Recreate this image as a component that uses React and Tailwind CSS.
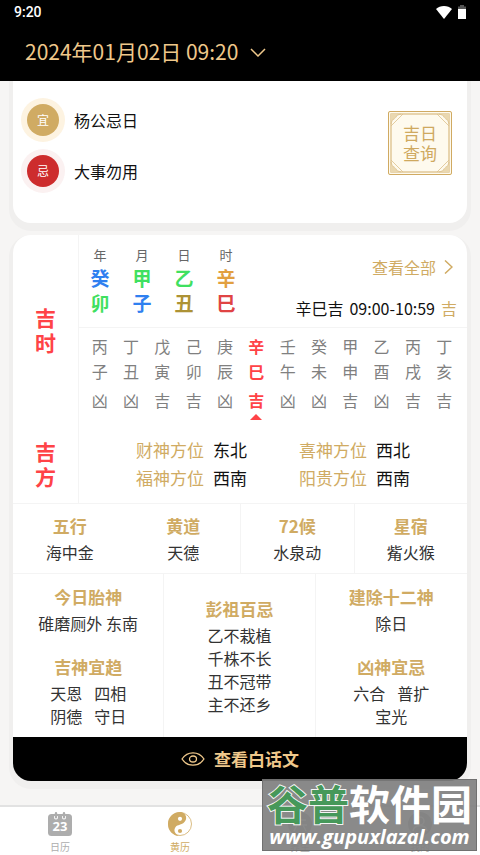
const pillars = [
  { label: '年', stem: '癸', branch: '卯', stemColor: 'text-[#2f80f0]', branchColor: 'text-[#3fe060]' },
  { label: '月', stem: '甲', branch: '子', stemColor: 'text-[#3fe060]', branchColor: 'text-[#2f80f0]' },
  { label: '日', stem: '乙', branch: '丑', stemColor: 'text-[#3fe060]', branchColor: 'text-[#ad9235]' },
  { label: '时', stem: '辛', branch: '巳', stemColor: 'text-[#e2a040]', branchColor: 'text-[#e04444]' },
];

const hourStems = [...'丙丁戊己庚辛壬癸甲乙丙丁'];
const hourBranches = [...'子丑寅卯辰巳午未申酉戌亥'];
const hourLuck = [...'凶凶吉吉凶吉凶凶吉凶吉吉'];
const currentHour = 5;

const directions = [
  ['财神方位', '东北'],
  ['喜神方位', '西北'],
  ['福神方位', '西南'],
  ['阳贵方位', '西南'],
];

const facts = [
  { title: '五行', value: '海中金', divider: false },
  { title: '黄道', value: '天德', divider: false },
  { title: '72候', value: '水泉动', divider: true },
  { title: '星宿', value: '觜火猴', divider: true },
];

function StatusBar() {
  return (
    <div className="flex h-6 items-center justify-between px-[14px] text-white">
      <span className="font-[Roboto,sans-serif] text-sm font-medium">9:20</span>
      <div className="flex items-center gap-[6px]">
        <svg width="16" height="13" viewBox="0 0 16 13" aria-hidden="true">
          <path d="M0 3C4-1 12-1 16 3L8 13Z" fill="#fff" />
        </svg>
        <svg width="8" height="14" viewBox="0 0 8 14" aria-hidden="true">
          <path d="M2 0h4v1.500h2V5H0V1.500h2z" fill="#555" />
          <path d="M0 4h8v10H0z" fill="#fff" />
        </svg>
      </div>
    </div>
  );
}

function Header() {
  return (
    <header className="h-[81px] bg-black">
      <StatusBar />
      <button type="button" className="flex h-14 items-center gap-3 pl-[25px] text-[21px] text-[#efc88b]">
        <span>2024年01月02日 09:20</span>
        <svg width="16" height="9" viewBox="0 0 16 9" fill="none" stroke="currentColor" strokeWidth="1.500" aria-hidden="true">
          <path d="M1 1l7 7 7-7" />
        </svg>
      </button>
    </header>
  );
}

function Advice({ mark, text, ring, fill }) {
  return (
    <li className="flex items-center gap-[9px]">
      <span className={`flex size-11 items-center justify-center rounded-full ${ring}`}>
        <span className={`flex size-8 items-center justify-center rounded-full text-xs text-white ${fill}`}>{mark}</span>
      </span>
      <span className="text-base text-[#111]">{text}</span>
    </li>
  );
}

function Corner({ transform }) {
  return (
    <g transform={transform} fill="none" stroke="#dcc08a" strokeWidth="0.800">
      <path d="M3 13C4 8 8 4 13 3M3 9C6 9 9 6 9 3M3 15L15 3" />
      <path d="M3 3h7L3 10z" fill="#ead8b0" stroke="none" />
    </g>
  );
}

function DayQueryButton() {
  return (
    <button type="button" className="relative flex size-16 flex-col items-center justify-center bg-[#fefaee] text-[17px] leading-5 text-[#cfa95f]">
      <svg className="absolute inset-0" width="64" height="64" viewBox="0 0 64 64" aria-hidden="true">
        <rect x="0.500" y="0.500" width="63" height="63" rx="1.500" fill="none" stroke="#d0aa62" />
        <rect x="3" y="3" width="58" height="58" fill="none" stroke="#dcc08a" strokeWidth="1.300" />
        <Corner />
        <Corner transform="translate(64 0) scale(-1 1)" />
        <Corner transform="translate(0 64) scale(1 -1)" />
        <Corner transform="translate(64 64) scale(-1 -1)" />
      </svg>
      <span>吉日</span>
      <span>查询</span>
    </button>
  );
}

function SummaryCard() {
  return (
    <section className="flex items-start justify-between rounded-b-[18px] bg-white pt-[17px] pr-[15px] pb-[30px] pl-2 shadow-[0_4px_0_4px_#f0efee]">
      <ul className="flex flex-col gap-[7px]">
        <Advice mark="宜" text="杨公忌日" ring="bg-[#fdf3e1]" fill="bg-[#d0ab63]" />
        <Advice mark="忌" text="大事勿用" ring="bg-[#fbf1f1]" fill="bg-[#cd2c2d]" />
      </ul>
      <div className="pt-[13px]">
        <DayQueryButton />
      </div>
    </section>
  );
}

function SideTitle({ first, second }) {
  return (
    <h2 className="flex w-[66px] shrink-0 flex-col items-center justify-center border-r border-[#f4f4f4] pb-[2px] text-[21px] leading-[25px] font-bold text-[#ff4347]">
      <span>{first}</span>
      <span>{second}</span>
    </h2>
  );
}

function Pillars() {
  return (
    <div className="flex pt-[9px]">
      {pillars.map((p) => (
        <div key={p.label} className="flex w-[42px] flex-col items-center text-[19px] leading-[25px] font-bold">
          <span className="text-[13px] leading-[21px] font-normal text-[#666]">{p.label}</span>
          <span className={p.stemColor}>{p.stem}</span>
          <span className={p.branchColor}>{p.branch}</span>
        </div>
      ))}
    </div>
  );
}

function HourRow({ items, height, marker }) {
  return (
    <tr className={height}>
      {items.map((c, i) => (
        <td key={i} className={i === currentHour ? 'relative p-0 font-bold text-[#ff4347]' : 'p-0'}>
          {c}
          {marker && i === currentHour && (
            <svg className="absolute inset-x-0 bottom-[-4px] mx-auto" width="12" height="6" viewBox="0 0 12 6" aria-hidden="true">
              <path d="M6 0l6 6H0z" fill="#ff4347" />
            </svg>
          )}
        </td>
      ))}
    </tr>
  );
}

function LuckyHours() {
  return (
    <div className="flex h-48">
      <SideTitle first="吉" second="时" />
      <div className="flex min-w-0 flex-1 flex-col">
        <div className="flex h-[93px] justify-between border-b border-[#f4f4f4]">
          <Pillars />
          <div className="flex flex-col items-end pt-5 pr-[10px]">
            <a href="#all" className="flex items-center gap-2 pr-1 text-base leading-6 text-[#d0ab63]">
              查看全部
              <svg width="9" height="14" viewBox="0 0 9 14" fill="none" stroke="currentColor" strokeWidth="1.500" aria-hidden="true">
                <path d="M1 .5L8 7l-7 6.500" />
              </svg>
            </a>
            <p className="mt-[17px] flex gap-[6px] text-base leading-6 text-[#111]">
              <span>辛巳吉</span>
              <span>09:00-10:59</span>
              <span className="text-[#d0ab63]">吉</span>
            </p>
          </div>
        </div>
        <div className="pt-[5px] pr-[7px] pl-[5px]">
          <table className="w-full table-fixed border-collapse text-center text-base leading-6 text-[#808080]">
            <tbody>
              <HourRow items={hourStems} height="h-[25px]" />
              <HourRow items={hourBranches} height="h-[26px]" />
              <HourRow items={hourLuck} height="h-8" marker />
            </tbody>
          </table>
        </div>
      </div>
    </div>
  );
}

function LuckyDirections() {
  return (
    <div className="flex h-[76px]">
      <SideTitle first="吉" second="方" />
      <dl className="grid flex-1 grid-cols-2 content-center px-[31px] pb-[2px] text-[17px] leading-7">
        {directions.map(([name, value]) => (
          <div key={name} className="flex justify-center gap-[9px]">
            <dt className="text-[#d0ab63]">{name}</dt>
            <dd className="text-[#111]">{value}</dd>
          </div>
        ))}
      </dl>
    </div>
  );
}

function Block({ title, children }) {
  return (
    <div className="flex flex-col items-center text-base leading-[23px] text-[#333]">
      <h3 className="mb-[2px] text-[17px] leading-[27px] font-bold text-[#d0ab63]">{title}</h3>
      {children}
    </div>
  );
}

function AlmanacCard() {
  return (
    <section className="mt-3 overflow-hidden rounded-[18px] bg-white shadow-[0_4px_0_4px_#f0efee]">
      <LuckyHours />
      <LuckyDirections />
      <div className="grid h-[70px] grid-cols-4 border-t border-[#f4f4f4]">
        {facts.map((f) => (
          <div key={f.title} className={f.divider ? 'border-l border-[#f4f4f4] pt-2' : 'pt-2'}>
            <Block title={f.title}>
              <p>{f.value}</p>
            </Block>
          </div>
        ))}
      </div>
      <div className="grid h-[164px] grid-cols-3 border-t border-[#f4f4f4]">
        <div className="flex flex-col gap-[18px] border-r border-[#f4f4f4] pt-[9px]">
          <Block title="今日胎神">
            <p>碓磨厕外 东南</p>
          </Block>
          <Block title="吉神宜趋">
            <p className="flex gap-3"><span>天恩</span><span>四相</span></p>
            <p className="flex gap-3"><span>阴德</span><span>守日</span></p>
          </Block>
        </div>
        <div className="flex flex-col justify-center border-r border-[#f4f4f4]">
          <Block title="彭祖百忌">
            <p>乙不栽植</p>
            <p>千株不长</p>
            <p>丑不冠带</p>
            <p>主不还乡</p>
          </Block>
        </div>
        <div className="flex flex-col gap-[18px] pt-[9px]">
          <Block title="建除十二神">
            <p>除日</p>
          </Block>
          <Block title="凶神宜忌">
            <p className="flex gap-3"><span>六合</span><span>普扩</span></p>
            <p>宝光</p>
          </Block>
        </div>
      </div>
      <button type="button" className="flex h-11 w-full items-center justify-center gap-[9px] bg-black text-[17px] font-bold text-[#efc88b]">
        <svg width="24" height="14" viewBox="0 0 24 14" fill="none" stroke="currentColor" strokeWidth="1.300" aria-hidden="true">
          <path d="M1 7C4 2.500 8 .8 12 .8S20 2.500 23 7C20 11.500 16 13.200 12 13.200S4 11.500 1 7Z" />
          <ellipse cx="12" cy="7" rx="3.500" ry="3" />
        </svg>
        查看白话文
      </button>
    </section>
  );
}

function CalendarIcon() {
  return (
    <svg width="24" height="24" viewBox="0 0 24 24" aria-hidden="true">
      <rect y="2" width="24" height="22" rx="3.500" fill="#adadad" />
      <path d="M8 3v2.500M16 3v2.500" stroke="#fff" strokeWidth="4" strokeLinecap="round" />
      <path d="M5 2h6v2H5zM13 2h6v2h-6z" fill="#adadad" />
      <path d="M8 1.200v4M16 1.200v4" stroke="#adadad" strokeWidth="2.400" strokeLinecap="round" />
      <text x="12" y="18.500" textAnchor="middle" fill="#fff" fontSize="13" fontWeight="700" fontFamily="Noto Sans, sans-serif">23</text>
    </svg>
  );
}

function TaijiIcon() {
  return (
    <svg width="24" height="24" viewBox="0 0 24 24" aria-hidden="true">
      <circle cx="12" cy="12" r="11.500" fill="#fff" stroke="#d0ab63" strokeWidth="0.800" />
      <path d="M14 .2C6 -.8 0 5 0 12S5 23.500 11 24C7 22 5.500 19 7 16C8.500 12.500 12 13.500 15.500 11C19.500 8 19 2 14 .2Z" fill="#d0ab63" />
      <circle cx="12" cy="6.800" r="2.100" fill="#fff" />
      <circle cx="12" cy="19" r="2.100" fill="#d0ab63" />
    </svg>
  );
}

function WellnessIcon() {
  return (
    <svg width="24" height="24" viewBox="0 0 24 24" aria-hidden="true">
      <circle cx="12" cy="12" r="12" fill="#adadad" />
      <path d="M6 8h12M5 13h14M12 4v9M9 13l-3 6M15 13l3 6" stroke="#fff" strokeWidth="1.500" />
    </svg>
  );
}

function ProfileIcon() {
  return (
    <svg width="24" height="24" viewBox="0 0 24 24" aria-hidden="true">
      <circle cx="12" cy="12" r="12" fill="#adadad" />
      <circle cx="12" cy="9" r="4" fill="none" stroke="#fff" strokeWidth="1.500" />
      <path d="M5 19c1-7 13-7 14 0" fill="none" stroke="#fff" strokeWidth="1.500" />
    </svg>
  );
}

function SiteStamp() {
  return (
    <div className="absolute right-[3px] bottom-1 flex h-[72px] w-[215px] flex-col items-center justify-end border border-[#707070] bg-[#808080]/92 font-bold whitespace-nowrap text-white">
      <p className="text-[41px] leading-[42px]">
        <span className="text-[#46985a] [paint-order:stroke_fill] [-webkit-text-stroke:2px_#f4f4f4]">谷普</span>软件园
      </p>
      <p className="font-['Open_Sans',sans-serif] text-xl leading-[27px] italic">www.gupuxlazal.com</p>
    </div>
  );
}

function TabBar() {
  const tabs = [
    { label: '日历', Icon: CalendarIcon },
    { label: '黄历', Icon: TaijiIcon, active: true },
    { label: '养生', Icon: WellnessIcon },
    { label: '我的', Icon: ProfileIcon },
  ];
  return (
    <nav className="relative grid h-[50px] grid-cols-4 border-t-2 border-[#e2e2e2] bg-white">
      {tabs.map(({ label, Icon, active }) => (
        <a
          key={label}
          href={`#${label}`}
          className={`flex flex-col items-center gap-1 pt-[5px] text-[10px] leading-[14px] ${active ? 'text-[#d0ab63]' : 'text-[#adadad]'}`}
        >
          <Icon />
          {label}
        </a>
      ))}
      <SiteStamp />
    </nav>
  );
}

export default function App() {
  return (
    <div className="flex min-h-screen flex-col bg-[#f6f5f4] font-['Noto_Sans_CJK_SC',sans-serif]" lang="zh-CN">
      <Header />
      <main className="flex-1 px-[13px] pb-6">
        <SummaryCard />
        <AlmanacCard />
      </main>
      <TabBar />
    </div>
  );
}
